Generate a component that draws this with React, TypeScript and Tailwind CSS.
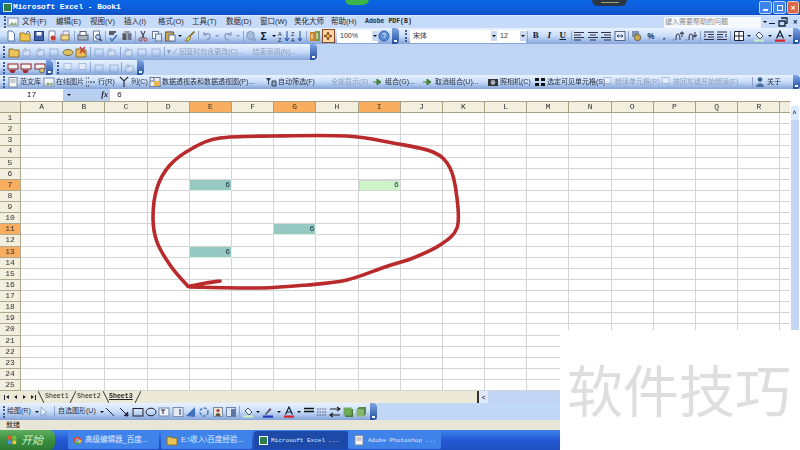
import React from 'react';

const cn = (...c: (string | false | undefined)[]) => c.filter(Boolean).join(' ');

const toolbarBg = 'bg-gradient-to-b from-[#e9f2ff] via-[#c8dcf9] to-[#83a3d9]';
const cjk = "font-['Liberation_Sans','Noto_Sans_CJK_SC',sans-serif]";
const mono = "font-['Liberation_Mono','Noto_Sans_CJK_SC',monospace]";

// little toolbar drawings, all on a 12x12 box
const icons: Record<string, React.ReactNode> = {
  new: <path d="M3 1h4l2.5 2.5V11H3z" fill="#fff" stroke="#5a76a6" />,
  open: <><path d="M1 3h4l1 1h5v7H1z" fill="#f0c24e" stroke="#9a7a2a" /><path d="M7 3l2-2 2 2" fill="none" stroke="#3d6fc0" /></>,
  save: <><rect x="1.5" y="1.5" width="9" height="9" fill="#3d5fa8" stroke="#243d78" /><rect x="3.5" y="2" width="5" height="3.5" fill="#fff" /></>,
  perm: <><path d="M3 1h6v10H3z" fill="#fff" stroke="#7a8aa8" /><circle cx="7" cy="8" r="2.5" fill="#c8402e" /></>,
  mail: <><path d="M3 1h6v10H3z" fill="#eef" stroke="#8a9ab8" /><rect x="1" y="5" width="8" height="5" fill="#f2d68a" stroke="#8a7a4a" /></>,
  print: <><rect x="1" y="5" width="10" height="5" fill="#aab4c0" stroke="#5a6470" /><rect x="3" y="1.5" width="6" height="4" fill="#fff" stroke="#5a6470" /></>,
  preview: <><path d="M2.5 1h6v10h-6z" fill="#fff" stroke="#6a7a98" /><circle cx="7" cy="7" r="2.4" fill="#bcd4f0" stroke="#30456a" /><path d="M9 9l2 2" stroke="#30456a" strokeWidth="1.3" /></>,
  spell: <><path d="M2 2h7M2 4h5" stroke="#333" strokeWidth="1.4" /><path d="M3 8l2 3 5-6" fill="none" stroke="#3a6ab0" strokeWidth="1.3" /></>,
  research: <><rect x="1.5" y="3" width="4" height="7" fill="#555" /><rect x="6.5" y="3" width="4" height="7" fill="#6a7288" /><rect x="3" y="1" width="6" height="3" fill="#99a" /></>,
  cut: <><path d="M4 1l3 7M8 1L5 8" stroke="#445" strokeWidth="1.1" /><circle cx="3.5" cy="9.5" r="1.5" fill="none" stroke="#a33" /><circle cx="8.5" cy="9.5" r="1.5" fill="none" stroke="#a33" /></>,
  copy: <><rect x="1.5" y="1.5" width="6" height="7" fill="#fff" stroke="#6a7a98" /><rect x="4.5" y="4" width="6" height="7" fill="#dbe6f6" stroke="#6a7a98" /></>,
  paste: <><rect x="1.5" y="2" width="8" height="9" fill="#c9a24a" stroke="#7a5f24" /><rect x="5" y="5" width="6" height="6" fill="#fff" stroke="#5a76a6" /><rect x="3.5" y="1" width="4" height="2" fill="#889" /></>,
  brush: <><path d="M10.5 1.5L5 7" stroke="#7a5f24" strokeWidth="1.6" /><path d="M5 6l2 2-3 3-3 0z" fill="#e8d25a" stroke="#8a7a2a" /></>,
  undo: <path d="M3 2v3h3M3 5c2-2 6-2 6 1s-2 4-4 4" fill="none" stroke="#8097bf" strokeWidth="1.2" />,
  redo: <path d="M9 2v3H6M9 5C7 3 3 3 3 6s2 4 4 4" fill="none" stroke="#8097bf" strokeWidth="1.2" />,
  link: <><circle cx="5.5" cy="5.5" r="4" fill="#a7bcdc" stroke="#8097bf" /><path d="M6 9l5-1v3H6z" fill="#8fa6cc" /></>,
  sortA: <><text x="0" y="5.5" fontSize="5.5" fontFamily="Liberation Sans" fill="#123">A</text><text x="0" y="11.5" fontSize="5.5" fontFamily="Liberation Sans" fill="#123">Z</text><path d="M9 1v9M7 8l2 3 2-3" fill="none" stroke="#1d4a9a" /></>,
  sortD: <><text x="0" y="5.5" fontSize="5.5" fontFamily="Liberation Sans" fill="#123">Z</text><text x="0" y="11.5" fontSize="5.5" fontFamily="Liberation Sans" fill="#123">A</text><path d="M9 1v9M7 8l2 3 2-3" fill="none" stroke="#1d4a9a" /></>,
  chart: <><rect x="1" y="2" width="5" height="9" fill="#c9872e" /><rect x="6" y="1" width="5" height="10" fill="#7f9a4a" /><path d="M3 4v5M8 3v6" stroke="#fff" /></>,
  draw: <><path d="M2 6h8M6 2v8" stroke="#8a5a3a" strokeWidth="2" /><circle cx="6" cy="6" r="2.2" fill="#e8c14a" stroke="#8a3a2a" /></>,
  help: <><circle cx="6" cy="6" r="5" fill="#5d8fd8" stroke="#2f5ea8" /><path d="M4.5 4.5c.5-1.5 3-1.5 3 0S6 6 6 7.5" fill="none" stroke="#fff" /></>,
  folder2: <><path d="M1 3h4l1 1h5v7H1z" fill="#ecc455" stroke="#8a7030" /></>,
  rev1: <><path d="M2 4h7v6H2z" fill="#dfe7f3" stroke="#7f95bc" /><path d="M3 2l3 2-3 2" fill="none" stroke="#7f95bc" /></>,
  rev2: <><rect x="2" y="3" width="8" height="7" fill="none" stroke="#7f95bc" /></>,
  comment: <><path d="M1 3h4l1 1h5v7H1z" fill="#e8bd55" stroke="#8a7030" /><path d="M5 1l5 6M10 1L5 7" stroke="#c33" strokeWidth="1.4" /></>,
  blob: <ellipse cx="6" cy="6.5" rx="5" ry="3" fill="#d9c163" stroke="#7a6a30" />,
  red: <><rect x="1" y="2" width="10" height="5" fill="#f4f4f4" stroke="#8a2020" /><path d="M2 8h7l-2 3H4z" fill="#a82a2a" /></>,
  redY: <><rect x="1" y="2" width="10" height="5" fill="#f4f4f4" stroke="#8a2020" /><circle cx="8" cy="8.5" r="2.5" fill="#d9c163" stroke="#666" /></>,
  left: <path d="M1 2.5h10M1 5h7M1 7.5h10M1 10h7" stroke="#334" />,
  center: <path d="M1 2.5h10M3 5h6M1 7.5h10M3 10h6" stroke="#334" />,
  right: <path d="M1 2.5h10M4 5h7M1 7.5h10M4 10h7" stroke="#334" />,
  merge: <><rect x="1" y="1.5" width="10" height="9" fill="#e6eefa" stroke="#56688a" /><path d="M4 6h4M3 6l1.5-1.5M3 6l1.5 1.5M9 6L7.5 4.5M9 6L7.5 7.5" stroke="#33466a" /></>,
  money: <><rect x="1" y="1" width="7" height="6" fill="#7e93b0" /><circle cx="6.5" cy="7.5" r="3.2" fill="#c9a64a" stroke="#665" /></>,
  inc: <path d="M1 10h1M4 10c0-3 0-6 2-6s2 3 2 6M10 2v5M8 4l2-2 2 2" fill="none" stroke="#445" strokeWidth="1.1" />,
  dec: <path d="M1 10h1M4 10c0-3 0-6 2-6s2 3 2 6M10 2v5M8 5l2 2 2-2" fill="none" stroke="#445" strokeWidth="1.1" />,
  indentL: <path d="M1 2h10M5 4.5h6M5 7h6M1 9.5h10M1 4l2 1.5L1 7" fill="none" stroke="#334" />,
  indentR: <path d="M1 2h10M1 4.5h6M1 7h6M1 9.5h10M11 4L9 5.5 11 7" fill="none" stroke="#334" />,
  border: <path d="M1.5 1.5h9v9h-9zM6 1.5v9M1.5 6h9" fill="#fff" stroke="#223" />,
  fill: <><path d="M3 5l3-3 4 4-3 3z" fill="#e8f0fa" stroke="#556" /><rect x="1" y="9.5" width="10" height="2" fill="#c8f2c4" /></>,
  fontA: <><path d="M2.5 8.5L6 1l3.5 7.5M4 6h4" fill="none" stroke="#123" strokeWidth="1.2" /><rect x="1" y="9.5" width="10" height="2.2" fill="#d8232a" /></>,
  doc: <><rect x="2" y="1.5" width="8" height="9.5" fill="#f7f7f2" stroke="#7a8aa8" /><path d="M3.5 4h5M3.5 6h5" stroke="#99a" /></>,
  pic: <><rect x="1" y="2" width="10" height="8" fill="#f3f7fc" stroke="#7a8aa8" /><path d="M2 9l3-3 2 2 2-2 1 3z" fill="#8ab07a" /></>,
  row: <><path d="M1 2h3M1 6h3M1 10h3" stroke="#222" strokeDasharray="1 1" /><path d="M5 6h6" stroke="#222" strokeDasharray="2 1" /></>,
  col: <path d="M2 1l4 4 4-4M6 5v6" fill="none" stroke="#333" strokeWidth="1.2" />,
  pivot: <><rect x="1" y="1.5" width="10" height="9" fill="#e9eef6" stroke="#6a7a98" /><rect x="5" y="5" width="5" height="5" fill="#e6b84a" /><path d="M1 5h4M5 1.5v4" stroke="#6a7a98" /></>,
  filter: <><path d="M1 2h5L4 5v4L3 8V5z" fill="#345" /><path d="M7 5h4v5H7z" fill="#8fa6cc" stroke="#345" /></>,
  arrowG: <path d="M1 6h5M5 3l4 3-4 3z" fill="#4a8a3a" stroke="#3f7a32" />,
  camera: <><rect x="1" y="3" width="10" height="7" fill="#333" /><circle cx="6" cy="6.5" r="2.4" fill="#aab" /></>,
  visible: <path d="M1 2h4v3H1zM7 2h4v3H7zM1 7h4v3H1zM7 7h4v3H7z" fill="#111" />,
  speak: <><rect x="2" y="1.5" width="7" height="6" fill="#eef3fb" stroke="#93a6c9" /><path d="M7 8l3 3" stroke="#93a6c9" /></>,
  person: <><circle cx="6" cy="3.5" r="2.3" fill="#3d5b8a" /><path d="M2 11c0-5 8-5 8 0z" fill="#4f6f9f" /></>,
  cursor: <path d="M3 1v9l2.5-2 2 3 1-.7-2-3L9 7z" fill="#fff" stroke="#6f86ad" />,
  line: <path d="M2 2l8 8" stroke="#223" />,
  arrow: <path d="M2 2l7 7M6 9.5l4 .5-.5-4" fill="#223" stroke="#223" />,
  rect: <rect x="1" y="2.5" width="10" height="7.5" fill="none" stroke="#223" />,
  oval: <ellipse cx="6" cy="6" rx="5" ry="3.8" fill="none" stroke="#223" />,
  textbox: <><rect x="1" y="2" width="10" height="8" fill="#eef3fb" stroke="#6f86ad" /><path d="M3 4h4M5 4v4" stroke="#223" /></>,
  wordart: <><rect x="1" y="1.5" width="10" height="9" fill="#e4ebf7" stroke="#7d8eb0" /><path d="M7 3h2v6H7z" fill="#7d8eb0" /></>,
  diagram: <path d="M1 10L10 1v10z" fill="#3f6fc0" />,
  cycle: <circle cx="6" cy="6" r="4" fill="none" stroke="#4f7fb5" strokeWidth="1.6" strokeDasharray="3 1.5" />,
  clip: <><rect x="1.5" y="1.5" width="9" height="9" fill="#e9e6d8" stroke="#7a8aa8" /><circle cx="6" cy="4.5" r="1.6" fill="#a33" /><path d="M3.5 10c0-4 5-4 5 0z" fill="#654" /></>,
  picture: <><rect x="1.5" y="1.5" width="9" height="9" fill="#dde6f4" stroke="#6f86ad" /><path d="M6 10.5V3h4.5v7.5z" fill="#5a76a6" /></>,
  lineColor: <><path d="M3 8l5-6 1.5 1.5L4 9z" fill="#556" /><rect x="1" y="9.5" width="10" height="2.2" fill="#2438b8" /></>,
  lines: <path d="M1 2.5h10M1 5.5h10" stroke="#111" strokeWidth="1.5" fill="none" />,
  dash: <path d="M1 3h10M1 6h10M1 9h10" stroke="#556" strokeDasharray="1.5 1" />,
  arrows: <path d="M1 3h10M1 9h10M8 1l3 2-3 2M4 7L1 9l3 2" fill="none" stroke="#222" strokeWidth="1.1" />,
  shadow: <><rect x="3" y="3" width="8" height="8" fill="#4a7a3a" /><rect x="1.5" y="1.5" width="8" height="8" fill="#6fa858" /></>,
  cube: <><path d="M1.5 3.5h7v7h-7z" fill="#86b56e" /><path d="M1.5 3.5L4 1h7L8.5 3.5zM8.5 3.5L11 1v7l-2.500 2.500z" fill="#5a8a48" /></>,
  winRestore: <path d="M4 2h6v5H8M2 5h6v5H2z" fill="none" stroke="#123" strokeWidth="1.3" />,
};

function Ico({ k, dim, className }: { k: string; dim?: boolean; className?: string }) {
  return (
    <svg viewBox="0 0 12 12" className={cn('w-[12px] h-[12px] shrink-0', dim && 'opacity-60', className)}>
      {icons[k]}
    </svg>
  );
}

function B({ k, dim, className = 'w-[13.5px]' }: { k: string; dim?: boolean; className?: string }) {
  return (
    <span className={cn('flex justify-center items-center shrink-0', className)}>
      <Ico k={k} dim={dim} />
    </span>
  );
}

function Sep({ className = 'w-[3px]' }: { className?: string }) {
  return (
    <span className={cn('flex justify-center shrink-0', className)}>
      <span className="w-px h-[11px] bg-[#8ba5d0]" />
    </span>
  );
}

function Drop({ className = 'w-[7px]', dim }: { className?: string; dim?: boolean }) {
  return (
    <span className={cn('flex justify-center items-center shrink-0', className)}>
      <span className={cn('w-0 h-0 border-x-[2px] border-x-transparent border-t-[2px]', dim ? 'border-t-[#8097bf]' : 'border-t-[#111]')} />
    </span>
  );
}

function Grip({ className }: { className?: string }) {
  return <span className={cn('w-[2px] h-[12px] border-l-2 border-dotted border-[#3d5c8f] shrink-0', className)} />;
}

function Chevron({ className }: { className?: string }) {
  return (
    <span className={cn('w-[7px] h-full shrink-0 rounded-r-sm bg-gradient-to-b from-[#7fa5e4] to-[#1f4d9e] flex items-end justify-center pb-[2px]', className)}>
      <span className="w-[3px] h-[2px] bg-white" />
    </span>
  );
}

function Combo({ w, text }: { w: string; text: string }) {
  return (
    <span className={cn('h-[13px] bg-white flex items-center shrink-0 pl-[3px]', w)}>
      <span className={cn(cjk, 'flex-1 text-[7px] text-[#333]')}>{text}</span>
      <span className="w-[6px] h-[10px] bg-[#c8d8f0] flex items-center justify-center">
        <span className="w-0 h-0 border-x-[2px] border-x-transparent border-t-[2px] border-t-[#111]" />
      </span>
    </span>
  );
}

function Menu({ w = 'w-[34px]', children }: { w?: string; children: React.ReactNode }) {
  return <span className={cn(cjk, 'text-[7.5px] text-[#2a2a2a] shrink-0 whitespace-nowrap', w)}>{children}</span>;
}

function Tool({ k, w, text, dim }: { k?: string; w: string; text: string; dim?: boolean }) {
  return (
    <span className={cn('flex items-center shrink-0 whitespace-nowrap', w)}>
      {k && <Ico k={k} dim={dim} className="mr-[1px] w-[9px] h-[9px]" />}
      <span className={cn(cjk, 'text-[7px]', dim ? 'text-[#8a9dbc]' : 'text-[#1f2a3a]')}>{text}</span>
    </span>
  );
}

const columns = 'ABCDEFGHIJKLMNOPQR'.split('');
const rows = Array.from({ length: 25 }, (_, i) => i + 1);
const hotCols = ['E', 'G', 'I'];
const hotRows = [7, 11, 13];
const teal = ['E7', 'G11', 'E13'];

function Sheet() {
  return (
    <div className="grid flex-1 grid-cols-[21px_repeat(18,42.2px)_1fr] grid-rows-[12px_repeat(25,11.13px)] bg-white">
      <div className="bg-[#ece8d6] border-r border-b border-t border-[#a9a183]" />
      {columns.map((c) => (
        <div
          key={c}
          className={cn(
            mono,
            'flex items-center justify-center text-[8px] border-r border-b border-t border-[#a9a183] text-[#333]',
            hotCols.includes(c) ? 'bg-[#f8ad5f]' : 'bg-[#f3efdf]',
          )}
        >
          {c}
        </div>
      ))}
      <div className="bg-[#f3efdf] border-b border-t border-[#a9a183]" />
      {rows.map((r) => (
        <React.Fragment key={r}>
          <div
            className={cn(
              mono,
              'flex items-center justify-center text-[8px] text-[#333] border-r border-b border-[#b0a98e]',
              hotRows.includes(r) ? 'bg-[#f8ad5f]' : 'bg-[#f3efdf]',
            )}
          >
            {r}
          </div>
          {columns.map((c) => {
            const id = `${c}${r}`;
            const isTeal = teal.includes(id);
            const isActive = id === 'I7';
            return (
              <div
                key={id}
                className={cn(
                  mono,
                  'flex items-center justify-end pr-[1px] text-[8px] text-[#234] border-r border-b',
                  isTeal ? 'bg-[#95c9c1] border-[#d8f0e0]' : 'border-[#d4d4d4]',
                  isActive && 'bg-[#cdf6c8] border border-[#4a6b4a]',
                )}
              >
                {isTeal || isActive ? '6' : ''}
              </div>
            );
          })}
          <div className="border-b border-[#d4d4d4]" />
        </React.Fragment>
      ))}
    </div>
  );
}

function Slash({ back }: { back?: boolean }) {
  return (
    <svg viewBox="0 0 6 12" className="w-[6px] h-[12px] shrink-0">
      <path d={back ? 'M0 0l6 12' : 'M6 0L0 12'} stroke="#333" fill="none" />
    </svg>
  );
}

function NavArrow({ dir, bar }: { dir: 'l' | 'r'; bar?: boolean }) {
  return (
    <span className="flex items-center justify-center w-[9px] gap-[1px]">
      {bar && dir === 'l' && <span className="w-px h-[5px] bg-[#223]" />}
      <span className={cn('w-0 h-0 border-y-[2.5px] border-y-transparent', dir === 'l' ? 'border-r-[3px] border-r-[#223]' : 'border-l-[3px] border-l-[#223]')} />
      {bar && dir === 'r' && <span className="w-px h-[5px] bg-[#223]" />}
    </span>
  );
}

function Task({ k, text, active, latin, w = 'w-[93px]' }: { k: React.ReactNode; text: string; active?: boolean; latin?: boolean; w?: string }) {
  return (
    <span
      className={cn(
        'h-[18px] flex items-center gap-[3px] pl-[5px] rounded-[2px] shrink-0 whitespace-nowrap text-[#dfeaff]',
        w,
        active ? 'bg-[#1d4aa8]' : 'bg-[#3f83ea]',
      )}
    >
      {k}
      <span className={latin ? cn(mono, 'text-[6px]') : cn(cjk, 'text-[7.5px]')}>{text}</span>
    </span>
  );
}

// hand-drawn ring, smoothed through the traced points
function smooth(p: number[][]) {
  let d = `M${p[0][0]} ${p[0][1]}`;
  for (let i = 0; i < p.length - 1; i++) {
    const a = p[Math.max(i - 1, 0)];
    const b = p[i];
    const c = p[i + 1];
    const e = p[Math.min(i + 2, p.length - 1)];
    d += `C${b[0] + (c[0] - a[0]) / 6} ${b[1] + (c[1] - a[1]) / 6} ${c[0] - (e[0] - b[0]) / 6} ${c[1] - (e[1] - b[1]) / 6} ${c[0]} ${c[1]}`;
  }
  return d;
}

const ring = [
  [220, 281], [206, 283], [190, 286], [186, 284], [170, 265], [157, 242], [153, 218], [157, 188],
  [170, 165], [193, 148], [220, 138], [273, 136], [347, 136], [393, 143], [433, 152], [450, 168],
  [457, 198], [457, 228], [440, 245], [413, 258], [385, 267], [347, 280], [307, 285], [260, 288], [190, 287],
];

export default function App() {
  return (
    <div className="relative w-[800px] h-[450px] overflow-hidden bg-[#c0d5f4]">
      <div className="flex flex-col w-full h-full blur-[0.4px]">
        {/* title bar */}
        <div className="h-[15px] shrink-0 flex items-center bg-gradient-to-b from-[#0a66e6] via-[#0d5fdc] to-[#0c4fc4] pl-[3px] pr-[1px]">
          <span className="w-[9px] h-[9px] bg-[#2f7d4a] border border-[#d8e8d8] shrink-0" />
          <span className={cn(mono, 'ml-[1px] text-[7.8px] font-bold text-white whitespace-nowrap')}>Microsoft Excel - Book1</span>
          <span className="flex-1" />
          <span className="w-[13px] h-[13px] rounded-[2px] bg-[#3f83ea] border border-[#bcd4f8] flex items-end pl-[3px] pb-[2px]">
            <span className="w-[5px] h-[2px] bg-white" />
          </span>
          <span className="w-[13px] h-[13px] ml-[1px] rounded-[2px] bg-[#3f83ea] border border-[#bcd4f8] flex items-center justify-center">
            <span className="w-[6px] h-[6px] border border-white" />
          </span>
          <span className="w-[12px] h-[13px] ml-[1px] rounded-[2px] bg-[#d9694a] border border-[#f0c8b8] flex items-center justify-center text-white text-[9px] leading-none font-bold">
            ×
          </span>
        </div>

        {/* menu */}
        <div className="h-[13px] shrink-0 flex items-center bg-[#c6dafa] pl-[4px] border-t border-[#d8e6fd]">
          <Grip className="h-[10px]" />
          <Ico k="pic" className="w-[11px] h-[11px] ml-[1px] mr-[3px]" />
          <Menu>文件(F)</Menu>
          <Menu>编辑(E)</Menu>
          <Menu>视图(V)</Menu>
          <Menu>插入(I)</Menu>
          <Menu>格式(O)</Menu>
          <Menu>工具(T)</Menu>
          <Menu>数据(D)</Menu>
          <Menu>窗口(W)</Menu>
          <Menu w="w-[37px]">美化大师</Menu>
          <Menu>帮助(H)</Menu>
          <span className={cn(mono, 'text-[6.5px] font-bold text-[#2a2a2a] w-[299px] shrink-0 whitespace-nowrap')}>Adobe PDF(B)</span>
          <span className={cn(cjk, 'w-[97px] h-[11px] flex items-center pl-[1px] bg-[#f6f9fe] text-[7px] text-[#8a8a8a] shrink-0')}>键入需要帮助的问题</span>
          <Drop />
          <span className="ml-[1px] w-[6px] h-[1.5px] mt-[3px] bg-[#123] shrink-0" />
          <Ico k="winRestore" className="w-[8px] h-[8px] ml-[2px]" />
          <span className="ml-[4px] text-[8px] leading-none font-bold text-[#123]">×</span>
        </div>

        {/* standard + format toolbars */}
        <div className={cn('h-[16px] shrink-0 flex items-center pl-[3px]', toolbarBg)}>
          <B k="new" className="w-[15.5px]" />
          <B k="open" />
          <B k="save" />
          <B k="perm" />
          <B k="mail" />
          <Sep className="w-[4px]" />
          <B k="print" />
          <B k="preview" />
          <Sep />
          <B k="spell" />
          <B k="research" />
          <Sep />
          <B k="cut" />
          <B k="copy" className="w-[13px]" />
          <B k="paste" />
          <Drop className="w-[6.5px]" />
          <B k="brush" className="w-[14px]" />
          <Sep />
          <B k="undo" className="w-[13px]" />
          <Drop className="w-[8px]" dim />
          <B k="redo" className="w-[13px]" />
          <Drop className="w-[8px]" dim />
          <Sep className="w-[2px]" />
          <B k="link" className="w-[13px]" />
          <span className="w-[13.5px] shrink-0 text-center text-[10px] leading-none font-bold text-[#123]">Σ</span>
          <Drop className="w-[6.5px]" />
          <B k="sortA" />
          <B k="sortD" />
          <Sep className="w-[4px]" />
          <B k="chart" />
          <span className="w-[13.5px] h-[14px] shrink-0 flex items-center justify-center bg-[#fbd9a0] border border-[#8a4a2a]">
            <Ico k="draw" className="w-[10px] h-[10px]" />
          </span>
          <span className="w-[2px] shrink-0" />
          <Combo w="w-[41px]" text="100%" />
          <B k="help" className="w-[12px]" />
          <span className="w-[1.5px] shrink-0" />
          <Chevron />
          <span className="w-[6.5px] shrink-0" />
          <Grip className="mr-[3px]" />
          <Combo w="w-[87px]" text="宋体" />
          <Combo w="w-[29px]" text="12" />
          <Sep />
          <span className="w-[13.5px] text-center font-['Liberation_Serif',serif] text-[9px] font-bold text-[#123] shrink-0">B</span>
          <span className="w-[13.5px] text-center font-['Liberation_Serif',serif] text-[9px] italic font-bold text-[#123] shrink-0">I</span>
          <span className="w-[13.5px] text-center font-['Liberation_Serif',serif] text-[9px] underline font-bold text-[#123] shrink-0">U</span>
          <Sep />
          <B k="left" />
          <B k="center" />
          <B k="right" />
          <B k="merge" />
          <Sep className="w-[4px]" />
          <B k="money" />
          <span className="w-[13.5px] text-center text-[8px] font-bold text-[#345] shrink-0">%</span>
          <span className="w-[13.5px] text-center text-[9px] font-bold text-[#234] shrink-0">,</span>
          <B k="inc" />
          <B k="dec" />
          <Sep className="w-[4px]" />
          <B k="indentL" />
          <B k="indentR" />
          <Sep />
          <B k="border" />
          <Drop />
          <B k="fill" />
          <Drop />
          <B k="fontA" className="w-[13px]" />
          <Drop />
          <Chevron />
        </div>

        {/* reviewing toolbar */}
        <div className="h-[16px] shrink-0 flex">
          <div className={cn('w-[310px] h-full flex items-center pl-[3px]', toolbarBg)}>
            <Grip className="mr-[2px]" />
            <B k="folder2" />
            <B k="rev1" dim />
            <B k="rev1" dim />
            <B k="rev2" dim />
            <B k="blob" />
            <B k="comment" />
            <Sep className="w-[4px]" />
            <B k="rev2" dim />
            <B k="rev1" dim />
            <Sep />
            <B k="rev1" dim />
            <B k="rev2" dim />
            <B k="rev2" dim />
            <Sep />
            <Tool w="w-[87px]" text="▼✓ 回复时包含更改(C)..." dim />
            <Tool w="w-[57px]" text="结束审阅(N)..." dim />
            <Chevron className="ml-auto" />
          </div>
        </div>

        {/* small toolbars */}
        <div className="h-[15px] shrink-0 flex">
          <div className={cn('w-[53px] h-full flex items-center pl-[3px]', toolbarBg)}>
            <Grip className="mr-[1px]" />
            <B k="red" className="w-[13px]" />
            <B k="red" className="w-[14px]" />
            <B k="redY" className="w-[13px]" />
            <Chevron className="ml-auto" />
          </div>
          <div className={cn('w-[85px] ml-[3px] h-full flex items-center pl-[1px]', toolbarBg)}>
            <Grip className="mr-[1px]" />
            <B k="speak" className="w-[15px]" dim />
            <B k="speak" className="w-[15px]" dim />
            <Sep className="w-[1px]" />
            <B k="rev2" className="w-[15px]" dim />
            <B k="rev2" className="w-[15px]" dim />
            <Sep className="w-[1px]" />
            <B k="rev1" className="w-[15px]" dim />
            <Chevron className="ml-auto" />
          </div>
        </div>

        {/* custom toolbar */}
        <div className={cn('h-[14px] shrink-0 flex items-center pl-[3px]', toolbarBg)}>
          <Grip className="mr-[2px]" />
          <Tool k="doc" w="w-[36px]" text="范文库" />
          <Tool k="pic" w="w-[42px]" text="在线图片" />
          <Tool k="row" w="w-[33px]" text="行(R)" />
          <Tool k="col" w="w-[31px]" text="列(C)" />
          <Tool k="pivot" w="w-[116px]" text="数据透视表和数据透视图(P)..." />
          <Tool k="filter" w="w-[66px]" text="自动筛选(F)" />
          <Tool w="w-[41px]" text="全部显示(S)" dim />
          <Tool k="arrowG" w="w-[50px]" text="组合(G)..." />
          <Tool k="arrowG" w="w-[65px]" text="取消组合(U)..." />
          <Tool k="camera" w="w-[47px]" text="照相机(C)" />
          <Tool k="visible" w="w-[68px]" text="选定可见单元格(S)" />
          <Tool k="speak" w="w-[58px]" text="朗读单元格(R)" dim />
          <Tool k="speak" w="w-[91px]" text="按回车键开始朗读(E)" dim />
          <Sep className="w-[3px]" />
          <Tool k="person" w="w-[39px]" text="关于" />
          <Chevron />
        </div>

        {/* formula bar */}
        <div className="h-[12px] shrink-0 flex items-center bg-white">
          <span className={cn(mono, 'w-[63px] text-center text-[8px] text-[#222] shrink-0')}>I7</span>
          <span className="w-[47px] h-full bg-[#b9cff2] flex items-center pl-[4px] shrink-0">
            <span className="w-0 h-0 border-x-[2px] border-x-transparent border-t-[2px] border-t-[#111]" />
            <span className="ml-auto pr-[2px] font-['Liberation_Serif',serif] italic text-[8px] font-bold text-[#223]">fx</span>
          </span>
          <span className={cn(mono, 'pl-[7px] text-[8px] text-[#222]')}>6</span>
        </div>

        {/* sheet + vertical scroll bar */}
        <div className="h-[290px] shrink-0 flex bg-white">
          <Sheet />
          <div className="w-[10px] shrink-0 pt-[5px] pl-[0.5px] pr-[1.5px] bg-white">
            <div className="h-full flex flex-col bg-[#c4d6f5]">
              <span className="h-[14px] bg-[#dce8fb] flex items-center justify-center text-[7px] font-bold leading-none text-[#345]">^</span>
            </div>
          </div>
        </div>

        {/* sheet tabs + horizontal scroll */}
        <div className="h-[12px] shrink-0 flex items-center bg-[#ece9d8] pl-[2px]">
          <NavArrow dir="l" bar />
          <NavArrow dir="l" />
          <NavArrow dir="r" />
          <NavArrow dir="r" bar />
          <Slash back />
          <span className={cn(mono, 'text-[6.6px] text-[#222] ml-[1px] w-[25px] shrink-0')}>Sheet1</span>
          <Slash />
          <span className={cn(mono, 'text-[6.6px] text-[#222] ml-[1px] w-[26px] shrink-0')}>Sheet2</span>
          <Slash back />
          <span className={cn(mono, 'text-[6.6px] text-[#222] underline font-bold w-[26px] shrink-0')}>Sheet3</span>
          <Slash />
          <span className="w-[338px] h-full border-r-2 border-[#333] shrink-0" />
          <span className="w-[9px] text-center text-[7px] leading-none text-[#223] bg-[#dfe9fb] h-full flex items-center justify-center shrink-0">&lt;</span>
          <span className="flex-1 h-full bg-[#c2d5f4]" />
        </div>

        {/* drawing toolbar */}
        <div className="h-[17px] shrink-0 flex bg-[#c0d7f8]">
          <div className={cn('w-[377px] h-full flex items-center pl-[3px]', toolbarBg)}>
            <Grip className="mr-[2px]" />
            <Tool w="w-[29px]" text="绘图(R)" />
            <Drop className="w-[2px]" />
            <B k="cursor" className="w-[12px]" dim />
            <Sep className="w-[8px]" />
            <Tool w="w-[41px]" text="自选图形(U)" />
            <Drop className="w-[5px]" />
            <B k="line" className="w-[12px]" />
            <B k="arrow" className="w-[15px]" />
            <B k="rect" />
            <B k="oval" className="w-[13px]" />
            <B k="textbox" />
            <B k="wordart" />
            <B k="diagram" className="w-[13px]" />
            <B k="cycle" className="w-[13px]" />
            <B k="clip" className="w-[14px]" />
            <B k="picture" />
            <Sep className="w-[3px]" />
            <B k="fill" />
            <Drop />
            <B k="lineColor" />
            <Drop />
            <B k="fontA" className="w-[13px]" />
            <Drop />
            <B k="lines" className="w-[13px]" />
            <B k="dash" />
            <B k="arrows" />
            <B k="shadow" className="w-[12px]" />
            <B k="cube" className="w-[14px]" />
            <Chevron className="ml-auto" />
          </div>
        </div>

        {/* status bar */}
        <div className={cn(cjk, 'h-[10px] shrink-0 flex items-center pl-[6px] bg-[#e8e6d6] text-[7px] text-[#222]')}>就绪</div>

        {/* task bar */}
        <div className="h-[20px] shrink-0 flex items-center bg-gradient-to-b from-[#3f82ea] via-[#2459d4] to-[#1f4fc0]">
          <span className="w-[55px] h-full shrink-0 flex items-center pl-[7px] gap-[4px] rounded-r-[6px] bg-gradient-to-b from-[#5fae5f] via-[#3a8f3f] to-[#2f7a34]">
            <svg viewBox="0 0 12 12" className="w-[10px] h-[10px] shrink-0">
              <rect x="1" y="1" width="4.5" height="4.5" fill="#e8563a" />
              <rect x="6.5" y="1" width="4.5" height="4.5" fill="#7ac142" />
              <rect x="1" y="6.5" width="4.5" height="4.5" fill="#4a8fe0" />
              <rect x="6.5" y="6.5" width="4.5" height="4.5" fill="#f2c531" />
            </svg>
            <span className={cn(cjk, 'text-[11px] italic text-[#cfeec8]')}>开始</span>
          </span>
          <span className="w-[13px] shrink-0" />
          <Task
            w="w-[91px]"
            text="高级编辑器_百度..."
            k={<svg viewBox="0 0 12 12" className="w-[9px] h-[9px] shrink-0"><circle cx="6" cy="6" r="5" fill="#d9503f" /><path d="M6 6L1.5 9A5 5 0 0 0 9 10z" fill="#4da64d" /><path d="M6 6l5-1a5 5 0 0 1-2 5z" fill="#f2c531" /><circle cx="6" cy="6" r="2" fill="#4a8fe0" stroke="#fff" strokeWidth=".6" /></svg>}
          />
          <span className="w-[2px] shrink-0" />
          <Task w="w-[91px]" text="E:\收入\百度经验..." k={<Ico k="folder2" className="w-[9px] h-[9px]" />} />
          <span className="w-[2px] shrink-0" />
          <Task w="w-[94px]" active latin text="Microsoft Excel ..." k={<span className="w-[9px] h-[9px] bg-[#2f7d4a] border border-white shrink-0" />} />
          <Task latin text="Adobe Photoshop ..." k={<Ico k="doc" className="w-[9px] h-[9px]" />} />
        </div>
      </div>

      {/* hand drawn ring over the sheet */}
      <svg viewBox="0 0 800 450" className="absolute inset-0 w-[800px] h-[450px] pointer-events-none blur-[0.3px]">
        <path d={smooth(ring)} fill="none" stroke="#b82a2c" strokeWidth="3.6" strokeLinecap="round" strokeLinejoin="round" />
      </svg>

      {/* things laid over the capture */}
      <span className="absolute left-[345px] top-[-7px] w-[24px] h-[12px] rounded-full bg-[#3bb54a]" />
      <span className="absolute left-[592px] top-[-6px] w-[35px] h-[12px] rounded-md bg-[#2c3742] flex items-end justify-center pb-[3px]">
        <span className="w-[18px] h-px bg-[#9aa878]" />
      </span>
      <div className="absolute left-[560px] top-[330px] w-[240px] h-[120px] bg-white flex justify-center pt-[22px] pr-[2px] font-['Noto_Sans_CJK_SC',sans-serif]">
        <span className="text-[56px] leading-[72px] text-[#dedede] whitespace-nowrap">软件技巧</span>
      </div>
    </div>
  );
}
